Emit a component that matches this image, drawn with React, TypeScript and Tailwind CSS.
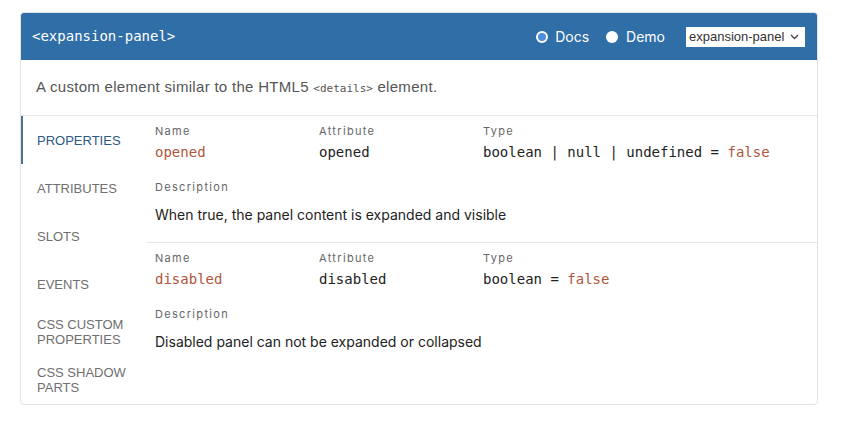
import React from "react";

const mono = "font-['DejaVu_Sans_Mono',monospace]";
const sans = "font-['Inter','Liberation_Sans',sans-serif]";

const navItems = [
  { label: "Properties", active: true },
  { label: "Attributes" },
  { label: "Slots" },
  { label: "Events" },
  { label: "CSS Custom Properties" },
  { label: "CSS Shadow Parts" },
];

const props = [
  {
    name: "opened",
    attribute: "opened",
    type: "boolean | null | undefined",
    value: "false",
    description: "When true, the panel content is expanded and visible",
  },
  {
    name: "disabled",
    attribute: "disabled",
    type: "boolean",
    value: "false",
    description: "Disabled panel can not be expanded or collapsed",
  },
];

const Label = ({ children }: { children: React.ReactNode }) => (
  <div className={`${sans} text-[11px] leading-[14px] tracking-[0.12em] text-[#666]`}>{children}</div>
);

const PropRow = ({ p, last }: { p: (typeof props)[number]; last?: boolean }) => (
  <div className={`pt-2 pb-[17px] pl-2 ${last ? "" : "border-b border-[#e6e6e6]"}`}>
    <div className="grid grid-cols-[164px_164px_1fr]">
      <div>
        <Label>Name</Label>
        <div className={`${mono} mt-1 text-[14px] leading-5 text-[#b0553d]`}>{p.name}</div>
      </div>
      <div>
        <Label>Attribute</Label>
        <div className={`${mono} mt-1 text-[14px] leading-5 text-[#222]`}>{p.attribute}</div>
      </div>
      <div>
        <Label>Type</Label>
        <div className={`${mono} mt-1 text-[14px] leading-5 text-[#222]`}>
          {p.type} = <span className="text-[#b0553d]">{p.value}</span>
        </div>
      </div>
    </div>
    <div className="mt-[18px]">
      <Label>Description</Label>
      <p className={`${sans} mt-[11px] text-[14px] leading-5 text-[#222]`}>{p.description}</p>
    </div>
  </div>
);

export default function App() {
  return (
    <div className="min-h-screen bg-white pt-3 pl-5 pr-7">
      <div className="w-[798px] overflow-hidden rounded border border-[#e3e3e3]">
        {/* header */}
        <header className="flex h-[47px] items-center bg-[#2f6ea6] pl-[11px] pr-3">
          <h1 className={`${mono} text-[14px] text-white`}>&lt;expansion-panel&gt;</h1>
          <div className={`${sans} ml-auto flex items-center text-[14px] text-white`}>
            <label className="flex items-center">
              <span className="h-3 w-3 rounded-full border-2 border-white bg-[#4c8fe0]" />
              <span className="ml-[7px]">Docs</span>
            </label>
            <label className="ml-[17px] flex items-center">
              <span className="h-3 w-3 rounded-full bg-white" />
              <span className="ml-[8px]">Demo</span>
            </label>
            <div className="ml-[21px] flex h-5 w-[119px] items-center justify-between bg-white pl-[3px] pr-1.5">
              <span className="font-['Liberation_Sans',sans-serif] text-[13px] text-[#333]">expansion-panel</span>
              <svg width="9" height="6" viewBox="0 0 9 6" fill="none">
                <path d="M1 1l3.5 3.5L8 1" stroke="#444" strokeWidth="1.3" />
              </svg>
            </div>
          </div>
        </header>

        {/* intro */}
        <div className="flex h-14 items-center border-b border-[#e6e6e6] px-[15px]">
          <p className="font-['Liberation_Sans',sans-serif] text-[15px] tracking-[0.02em] text-[#555]">
            A custom element similar to the HTML5{" "}
            <code className={`${mono} text-[11px] tracking-normal`}>&lt;details&gt;</code> element.
          </p>
        </div>

        {/* body */}
        <div className="flex">
          <nav className="w-[126px] shrink-0">
            {navItems.map((item) => (
              <div
                key={item.label}
                className={`flex h-12 items-center border-l-2 pl-[14px] pr-2 font-['Liberation_Sans',sans-serif] text-[13px] uppercase leading-[15px] ${
                  item.active ? "border-[#4e7191] text-[#2c5a82]" : "border-transparent text-[#6f6f6f]"
                }`}
              >
                {item.label}
              </div>
            ))}
          </nav>
          <div className="flex-1">
            {props.map((p, i) => (
              <PropRow key={p.name} p={p} last={i === props.length - 1} />
            ))}
          </div>
        </div>
      </div>
    </div>
  );
}
